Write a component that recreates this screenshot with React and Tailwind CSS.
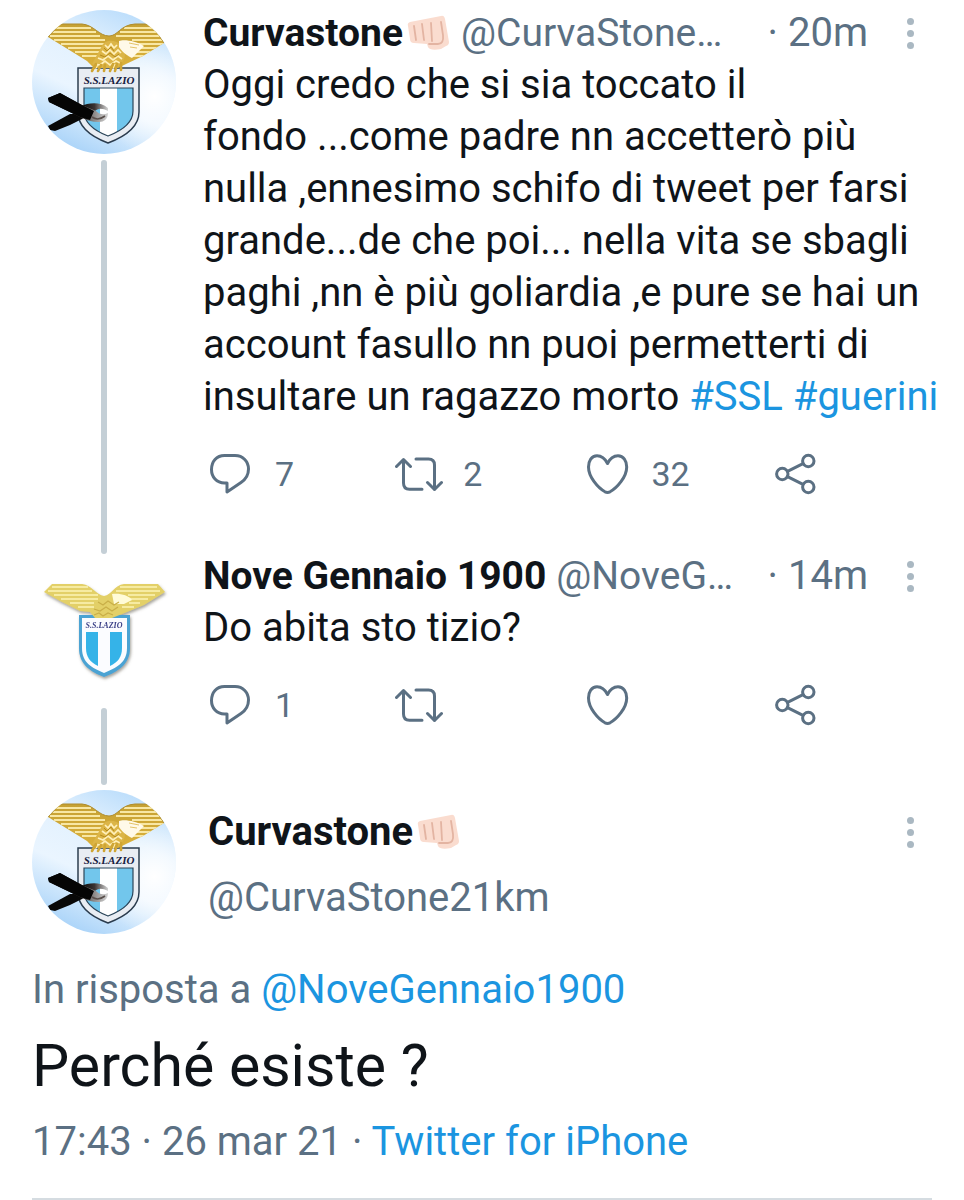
import { useId } from 'react';

function WreathedAvatar() {
    const id = useId();
    return (
        <svg viewBox="0 0 144 144" className="w-36 h-36 shrink-0" role="img" aria-label="Curvastone">
            <defs>
                <linearGradient id={`${id}sky`} x1="0.7" y1="0" x2="0.25" y2="1">
                    <stop offset="0" stopColor="#b9dcfb" />
                    <stop offset="0.3" stopColor="#e2f1fe" />
                    <stop offset="0.6" stopColor="#eaf5ff" />
                    <stop offset="1" stopColor="#a3d0f8" />
                </linearGradient>
                <radialGradient id={`${id}glow`} cx="0.85" cy="0.6" r="0.4">
                    <stop offset="0" stopColor="#fff" />
                    <stop offset="1" stopColor="#fff" stopOpacity="0" />
                </radialGradient>
                <linearGradient id={`${id}gold`} x1="0" y1="0" x2="0" y2="1">
                    <stop offset="0" stopColor="#c39f32" />
                    <stop offset="1" stopColor="#dcb23c" />
                </linearGradient>
                <linearGradient id={`${id}silk`} x1="0" y1="0" x2="1" y2="0">
                    <stop offset="0" stopColor="#050505" />
                    <stop offset="0.5" stopColor="#3a3432" />
                    <stop offset="1" stopColor="#d4d4d4" />
                </linearGradient>
                <clipPath id={`${id}circle`}>
                    <circle cx="72" cy="72" r="72" />
                </clipPath>
                <clipPath id={`${id}wings`}>
                    <path d="M16 27 L28 14 H50 C62 15 67 26 77 26 C86 26 88 15 103 14 H120 L132 33 L111 46 L94 54 L86 58 L62 58 L55 51 L34 38 Z" />
                </clipPath>
                <clipPath id={`${id}field`}>
                    <path d="M52 78 H101 V101 C101 114 89 121 76 126 C63 121 52 114 52 101 Z" />
                </clipPath>
            </defs>
            <g clipPath={`url(#${id}circle)`}>
                <rect width="144" height="144" fill={`url(#${id}sky)`} />
                <rect width="144" height="144" fill={`url(#${id}glow)`} />
                {/* shield */}
                <path d="M46 58 H107 V102 C107 118 92 127 76 133 C60 127 46 118 46 102 Z" fill="#e9edf3" stroke="#2b3c4e" strokeWidth="1.5" />
                <g clipPath={`url(#${id}field)`}>
                    <rect x="50" y="77" width="53" height="50" fill="#72c6ec" />
                    <rect x="68" y="77" width="17" height="50" fill="#fff" />
                </g>
                <path d="M52 78 H101 V101 C101 114 89 121 76 126 C63 121 52 114 52 101 Z" fill="none" stroke="#2c4559" strokeWidth="1.2" />
                <text x="77" y="74" textAnchor="middle" fontSize="11" fontWeight="bold" fontStyle="italic" fontFamily="'Liberation Serif', serif" fill="#17203f">S.S.LAZIO</text>
                {/* eagle */}
                <g clipPath={`url(#${id}wings)`}>
                    <rect x="10" y="10" width="125" height="50" fill={`url(#${id}gold)`} />
                    <path d="M24 18 H59 M16 22 H64 M18 26 H68 M22 30 H73 M29 34 H76 M36 38 H78 M43 42 H76 M50 46 H74 M92 18 H126 M88 22 H130 M84 26 H132 M100 30 H134 M104 34 H132 M104 38 H128 M104 42 H120 M98 46 H114" stroke="#f8e7a4" strokeWidth="1.8" />
                </g>
                <path d="M16 27 L28 14 H50 C62 15 67 26 77 26 C86 26 88 15 103 14 H120 L132 33" fill="none" stroke="#ae8b2c" strokeWidth="1" />
                <path d="M71 34 C76 29 84 30 90 36 C96 44 92 52 86 57 L66 58 L60 54 Z" fill="#dcb547" />
                <path d="M73 35 l3 3 3-4 3 4 3-3 M70 41 l4 3 4-4 4 4 4-4 3 3 M66 48 l5 2 5-4 5 4 5-4 4 3 M63 54 l5 1 5-4 5 4 6-4 4 2" fill="none" stroke="#fff0ba" strokeWidth="1.7" />
                <path d="M72 38 l3 3 4-4 3 4 M68 45 l5 2 5-4 5 4 4-3" fill="none" stroke="#b58a1d" strokeWidth="1" />
                <path d="M87 31 C92 29 104 31 112 36 L107 41 L100 48 C96 46 90 42 87 37 Z" fill="#fff9e8" />
                <path d="M97 33 l10 2 M98 37 l7 1" fill="none" stroke="#e3c468" strokeWidth="1" />
                <path d="M64 54 L60 61 M69 55 L66 61 M73 55 L72 61 M81 54 L78 61 M85 54 L83 61 M89 53 L89 60" stroke="#cfa534" strokeWidth="2.6" strokeLinecap="round" />
                <path d="M66 55 L63 60 M83 54 L81 59" stroke="#fff0b8" strokeWidth="1" />
                {/* mourning ribbon */}
                <path d="M49 96 C56 93 68 91 76 98 V101 C70 98 66 98 62 102 L56 102 Z" fill={`url(#${id}silk)`} />
                <path d="M16 116 L38 104 L57 104 L50 109 L38 115 L23 121 L18 120 Z" fill="#080808" />
                <path d="M16 88 L28 83 L50 95 L64 101 C68 105 72 105 76 103 C76 109 72 112 67 112 C60 112 54 110 48 107 L17 92 Z" fill={`url(#${id}silk)`} />
                <path d="M16 88 L28 83 L50 95 L62 101 L58 110 C54 109 51 108 48 107 L17 92 Z" fill="#050505" />
                <path d="M60 107 C64 110 69 109 73 106" fill="none" stroke="#5a504c" strokeWidth="1.6" />
            </g>
        </svg>
    );
}

function CrestAvatar() {
    const id = useId();
    return (
        <svg viewBox="0 0 144 144" className="w-36 h-36 shrink-0" role="img" aria-label="Nove Gennaio 1900">
            <defs>
                <filter id={`${id}shade`} x="-10%" y="-10%" width="120%" height="120%">
                    <feDropShadow dx="1" dy="2" stdDeviation="1.5" floodColor="#6b6558" floodOpacity="0.6" />
                </filter>
            </defs>
            <g filter={`url(#${id}shade)`}>
                <path d="M47 57 H98 V90 C98 107 85 114 72 119 C59 114 47 107 47 90 Z" fill="#4ba3d3" />
                <path d="M50 60 H95 V90 C95 105 84 110 72 115 C60 110 50 105 50 90 Z" fill="#fbfcff" />
                <path d="M54 74 H66 V108 C58 104 54 99 54 90 Z" fill="#35b3e8" />
                <path d="M78 74 H90 V90 C90 99 86 104 78 108 Z" fill="#35b3e8" />
                <text x="72" y="70" textAnchor="middle" fontSize="8" fontWeight="bold" fontStyle="italic" fontFamily="'Liberation Serif', serif" fill="#3a3f86">S.S.LAZIO</text>
                <path d="M12 34 L20 26 H50 C60 27 64 37 72 38 C80 37 82 27 92 26 H126 L133 34 L112 47 L95 54 L80 60 H63 L58 54 L48 53 L28 43 Z" fill="#e3d067" />
            </g>
            <path d="M20 29 H56 M16 33 H60 M22 37 H66 M29 41 H66 M38 45 H62 M46 49 H62 M88 29 H125 M84 33 H128 M96 37 H123 M98 41 H116 M97 45 H108 M90 49 H102" stroke="#f6eba2" strokeWidth="1.8" />
            <path d="M80 36 C88 35 96 37 100 42 L92 46 L82 46 Z" fill="#fffbd8" />
            <path d="M66 44 l5 3 5-4 6 4 5-3 M62 51 l6 2 6-4 6 4 6-4 M62 57 l5-2 4 3 5-3 5 2" fill="none" stroke="#c9af48" strokeWidth="1.3" />
        </svg>
    );
}

function Fist() {
    return (
        <svg viewBox="0 0 42 36" className="w-[42px] h-9 ml-1 shrink-0" role="img" aria-label="pugno">
            <path d="M3 7 L34 1 Q37 0 38 4 L42 27 Q42 30 39 31 L34 34 Q23 36 21 32 L20 29 L7 28 Q3 28 3 24 L1 11 Q0 8 3 7 Z" fill="#fadccf" />
            <path d="M7 11 L9 25 M15 9 L17 25 M24 8 L25 26 M34 7 L36 20 Q37 29 31 29 L22 29" fill="none" stroke="#e3b4a2" strokeWidth="1.8" strokeLinecap="round" />
        </svg>
    );
}

function Icon({ children }) {
    return (
        <svg viewBox="0 0 48 48" className="w-12 h-12 shrink-0" fill="none" stroke="currentColor" strokeWidth="3" strokeLinecap="round" strokeLinejoin="round" aria-hidden="true">
            {children}
        </svg>
    );
}

const icons = {
    Rispondi: <path d="M17.500 5.500 H28 C36 5.500 41.500 11.500 41.500 19 C41.500 25 38.500 29.500 34 32.500 L20 42 V33 H17.500 C9.500 33 4.500 27 4.500 19.500 C4.500 11.500 9.500 5.500 17.500 5.500 Z" />,
    Retweet: <path d="M1.500 16.500 L8.500 9.500 L15.500 16.500 M8.500 9.500 V33 Q8.500 39.300 14.500 39.300 H27 M21 9 H33.500 Q39.500 9 39.500 15 V39.500 M32.500 32.500 L39.500 39.500 L46.500 32.500" />,
    'Mi piace': <path d="M23.500 13.500 C21 8.500 17 5.800 13 5.800 C7.500 5.800 4.500 11 4.500 17 C4.500 27 14 38 21 41.800 Q23.500 43 26 41.800 C33 38 42.700 27 42.700 17 C42.700 11 39.500 5.800 34 5.800 C30 5.800 26 8.500 23.500 13.500 Z" />,
    Condividi: (
        <>
            <circle cx="10.300" cy="24" r="5.700" />
            <circle cx="36.300" cy="11" r="5.700" />
            <circle cx="36.300" cy="37" r="5.700" />
            <path d="M15.500 21.400 L31 13.600 M15.500 26.600 L31 34.400" />
        </>
    ),
};

function Actions({ counts }) {
    return (
        <div className="grid grid-cols-4 mt-[27px] pl-1 -mr-7">
            {Object.keys(icons).map((label) => (
                <button key={label} type="button" aria-label={label} className="flex items-center gap-5 text-[34px] leading-[48px] text-[#5b7083]">
                    <Icon>{icons[label]}</Icon>
                    {counts[label] && <span>{counts[label]}</span>}
                </button>
            ))}
        </div>
    );
}

function MoreButton() {
    return (
        <button type="button" aria-label="Altro" className="flex flex-col items-center gap-[5px] w-11 shrink-0">
            <span className="w-[7px] h-[7px] rounded-full bg-[#aab8c2]" />
            <span className="w-[7px] h-[7px] rounded-full bg-[#aab8c2]" />
            <span className="w-[7px] h-[7px] rounded-full bg-[#aab8c2]" />
        </button>
    );
}

function Tweet({ avatar, avatarClass, name, badge, handle, time, counts, children }) {
    return (
        <article className="flex gap-[27px]">
            <div className={`flex flex-col items-center shrink-0 ${avatarClass}`}>
                {avatar}
                <div className="w-1.5 flex-1 mt-1.5 -mb-1 rounded-full bg-[#c4cfd6]" />
            </div>
            <div className="flex-1 min-w-0 pb-[52px]">
                <header className="flex items-center">
                    <div className="flex flex-1 items-center min-w-0 whitespace-nowrap text-[39px]">
                        <span className="font-bold">{name}</span>
                        {badge}
                        <span className={badge ? 'ml-3 text-[#5b7083]' : 'ml-2.5 text-[#5b7083]'}>{handle}</span>
                    </div>
                    <span className="mr-5 text-[#5b7083]">· {time}</span>
                    <MoreButton />
                </header>
                <p className="-mr-6">{children}</p>
                <Actions counts={counts} />
            </div>
        </article>
    );
}

export default function App() {
    return (
        <main className="min-h-screen bg-white pt-[7px] px-8 font-['Roboto',sans-serif] text-[40px] leading-[52px] text-[#0f1419]">
            <Tweet
                avatar={<WreathedAvatar />}
                avatarClass="pt-[3px]"
                name="Curvastone"
                badge={<Fist />}
                handle="@CurvaStone…"
                time="20m"
                counts={{ Rispondi: 7, Retweet: 2, 'Mi piace': 32 }}
            >
                Oggi credo che si sia toccato il<br />
                fondo ...come padre nn accetterò più<br />
                nulla ,ennesimo schifo di tweet per farsi<br />
                grande...de che poi... nella vita se sbagli<br />
                paghi ,nn è più goliardia ,e pure se hai un<br />
                account fasullo nn puoi permetterti di<br />
                insultare un ragazzo morto <a href="#ssl" className="text-[#1b95e0]">#SSL</a> <a href="#guerini" className="text-[#1b95e0]">#guerini</a>
            </Tweet>

            <Tweet
                avatar={<CrestAvatar />}
                avatarClass="pt-2"
                name="Nove Gennaio 1900"
                handle="@NoveG…"
                time="14m"
                counts={{ Rispondi: 1 }}
            >
                Do abita sto tizio?
            </Tweet>

            <article className="pt-[9px]">
                <header className="flex gap-8">
                    <WreathedAvatar />
                    <div className="flex-1 min-w-0 pt-4">
                        <div className="flex items-center">
                            <span className="font-bold">Curvastone</span>
                            <Fist />
                            <span className="flex-1" />
                            <MoreButton />
                        </div>
                        <p className="mt-3.5 text-[#5b7083]">@CurvaStone21km</p>
                    </div>
                </header>
                <p className="mt-[30px] text-[#5b7083]">
                    In risposta a <a href="#nove" className="text-[#1b95e0]">@NoveGennaio1900</a>
                </p>
                <p className="mt-3 text-[59px] leading-[76px]">Perché esiste ?</p>
                <p className="mt-3 text-[#5b7083]">
                    17:43 · 26 mar 21 · <a href="#source" className="text-[#1b95e0]">Twitter for iPhone</a>
                </p>
                <hr className="mt-[30px] border-t-2 border-[#d5dce1]" />
            </article>
        </main>
    );
}
